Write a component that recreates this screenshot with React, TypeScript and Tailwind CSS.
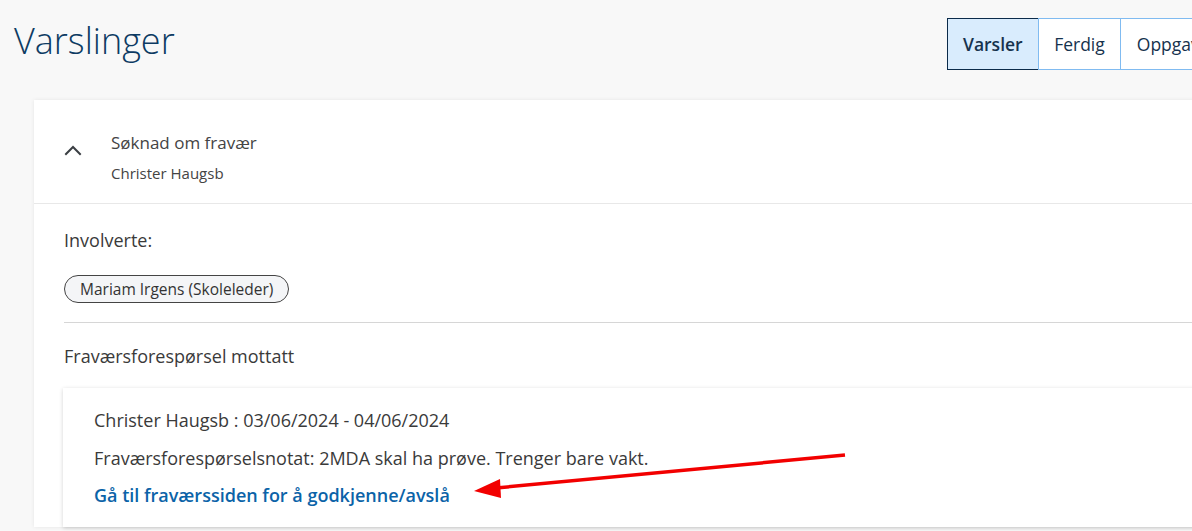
import React from "react";

const tabs = [
  { label: "Varsler", active: true },
  { label: "Ferdig", active: false },
  { label: "Oppgaver", active: false },
];

function ChevronUp() {
  return (
    <svg width="18" height="12" viewBox="0 0 18 12" fill="none">
      <path d="M2 10 L9 3 L16 10" stroke="#3b3f44" strokeWidth="2" strokeLinecap="square" />
    </svg>
  );
}

export default function App() {
  return (
    <div
      className="relative h-[531px] w-[1192px] overflow-hidden bg-[#f8f8f8] text-[#3a3a3a]"
      style={{ fontFamily: '"Open Sans", "Noto Sans", sans-serif' }}
    >
      <div className="w-[1264px] pl-[14px] pr-[34px]">
        {/* Header */}
        <div className="flex items-start pt-[18px]">
          <h1 className="mt-[1px] w-[933px] shrink-0 text-[36px] font-light leading-[44px] text-[#0d3b63]">
            Varslinger
          </h1>
          <div className="flex h-[52px] shrink-0">
            {tabs.map((t) =>
              t.active ? (
                <div
                  key={t.label}
                  className="flex items-center border border-[#0b2b4a] bg-[#d9ecfd] px-[15px] text-[17.5px] font-semibold text-[#16324d]"
                >
                  {t.label}
                </div>
              ) : (
                <div
                  key={t.label}
                  className="-ml-px flex items-center border border-[#80bbf1] bg-white px-[15.5px] text-[17.5px] text-[#16324d]"
                >
                  {t.label}
                </div>
              )
            )}
          </div>
        </div>

        {/* Card */}
        <div className="ml-[20px] mt-[30px] bg-white shadow-[0_0_4px_rgba(0,0,0,0.08)]">
          <div className="flex border-b border-[#e8e8e8] pl-[30px] pb-[20px] pt-[32px]">
            <div className="mt-[12px] w-[47px]">
              <ChevronUp />
            </div>
            <div>
              <div className="text-[17px] leading-[22px] text-[#444]">Søknad om fravær</div>
              <div className="mt-[9px] text-[15px] leading-[20px] text-[#444]">Christer Haugsb</div>
            </div>
          </div>

          <div className="pl-[30px]">
            <div className="pt-[24px] text-[18px] leading-[24px]">Involverte:</div>
            <div className="mt-[23px] flex">
              <span className="rounded-full border border-[#444] bg-[#f4f5f7] px-[15px] py-[3px] text-[15.5px] leading-[20px] text-[#333]">
                Mariam Irgens (Skoleleder)
              </span>
            </div>
            <div className="mt-[19px] border-t border-[#d6d6d6]" />
            <div className="mt-[21px] text-[18px] leading-[24px]">Fraværsforespørsel mottatt</div>

            <div className="-ml-px mt-[20px] bg-white pb-[20px] pl-[31px] pt-[20px] shadow-[0_1px_4px_rgba(0,0,0,0.18)]">
              <div className="text-[18px] leading-[24px]">Christer Haugsb : 03/06/2024 - 04/06/2024</div>
              <div className="mt-[14px] text-[18px] leading-[24px]">
                Fraværsforespørselsnotat: 2MDA skal ha prøve. Trenger bare vakt.
              </div>
              <a className="mt-[13px] block text-[18px] font-semibold leading-[24px] text-[#0b63a8]">
                Gå til fraværssiden for å godkjenne/avslå
              </a>
            </div>
          </div>
        </div>
      </div>

      {/* Annotation arrow */}
      <svg className="pointer-events-none absolute left-0 top-0" width="1192" height="531">
        <line x1="845" y1="455" x2="496" y2="488" stroke="#f20000" strokeWidth="3.5" />
        <polygon points="474,491 500,479 501,498" fill="#f20000" />
      </svg>
    </div>
  );
}
